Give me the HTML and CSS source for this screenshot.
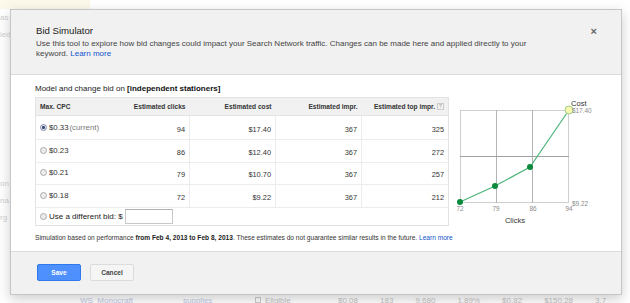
FILE: index.html
```html
<!DOCTYPE html>
<html lang="en">
<head>
    <meta charset="UTF-8">
    <meta name="viewport" content="width=device-width, initial-scale=1.0">
    <title>Bid Simulator</title>
    <link rel="stylesheet" href="styles.css">
</head>
<body>
    <!-- page behind the dialog -->
    <div class="page">
        <div class="page-top"></div>
        <div class="page-side">
            <span>as</span>
            <span>ied</span>
            <span class="gap">on</span>
            <span>na</span>
            <span>rg</span>
        </div>
        <div class="page-row">
            <span class="c-kw">WS_Monocraft</span>
            <span class="c-grp">supplies</span>
            <span class="c-st"><i class="box"></i>Eligible</span>
            <span class="c-n">$0.08</span>
            <span class="c-n">183</span>
            <span class="c-n">9,680</span>
            <span class="c-n">1.89%</span>
            <span class="c-n">$0.82</span>
            <span class="c-n">$150.28</span>
            <span class="c-n">3.7</span>
        </div>
    </div>

    <div class="dialog">
        <div class="dialog-head">
            <div class="title-row">
                <h1>Bid Simulator</h1>
                <span class="close">&#215;</span>
            </div>
            <p class="intro">Use this tool to explore how bid changes could impact your Search Network traffic. Changes can be made here and applied directly to your keyword. <a href="#">Learn more</a></p>
        </div>

        <div class="dialog-body">
            <div class="sim">
                <div class="sim-left">
                    <p class="model">Model and change bid on <b>[independent stationers]</b></p>
                    <table class="bids">
                        <tr class="head">
                            <th class="cpc">Max. CPC</th>
                            <th>Estimated clicks</th>
                            <th>Estimated cost</th>
                            <th>Estimated impr.</th>
                            <th>Estimated top impr. <span class="help">?</span></th>
                        </tr>
                        <tr class="first">
                            <td class="cpc"><label><input type="radio" name="bid" checked> $0.33 <span class="cur">(current)</span></label></td>
                            <td>94</td>
                            <td class="sep">$17.40</td>
                            <td class="sep">367</td>
                            <td class="sep">325</td>
                        </tr>
                        <tr>
                            <td class="cpc"><label><input type="radio" name="bid"> $0.23</label></td>
                            <td>86</td>
                            <td class="sep">$12.40</td>
                            <td class="sep">367</td>
                            <td class="sep">272</td>
                        </tr>
                        <tr>
                            <td class="cpc"><label><input type="radio" name="bid"> $0.21</label></td>
                            <td>79</td>
                            <td class="sep">$10.70</td>
                            <td class="sep">367</td>
                            <td class="sep">257</td>
                        </tr>
                        <tr>
                            <td class="cpc"><label><input type="radio" name="bid"> $0.18</label></td>
                            <td>72</td>
                            <td class="sep">$9.22</td>
                            <td class="sep">367</td>
                            <td class="sep">212</td>
                        </tr>
                        <tr class="other">
                            <td colspan="5"><label><input type="radio" name="bid"> Use a different bid: $ <input type="text" class="bid-input"></label></td>
                        </tr>
                    </table>
                </div>

                <svg class="chart" viewBox="452 96 150 132" width="150" height="132">
                    <rect x="460.5" y="111.5" width="108" height="92" fill="none" stroke="#cfcfcf"/>
                    <line x1="496.5" y1="111" x2="496.5" y2="204" stroke="#b5b5b5"/>
                    <line x1="532.5" y1="111" x2="532.5" y2="204" stroke="#b5b5b5"/>
                    <line x1="460" y1="157.5" x2="569" y2="157.5" stroke="#a0a0a0"/>
                    <polyline points="460,203 495,187 530,168 569,111" fill="none" stroke="#4cb57a" stroke-width="1.2"/>
                    <circle cx="460" cy="203" r="3" fill="#0b8a3c"/>
                    <circle cx="495" cy="187" r="3" fill="#0b8a3c"/>
                    <circle cx="530" cy="168" r="3" fill="#0b8a3c"/>
                    <circle cx="569" cy="111" r="4" fill="#f7f7b0" stroke="#9fd08a"/>
                    <text x="460" y="212" text-anchor="middle" class="tick">72</text>
                    <text x="496" y="212" text-anchor="middle" class="tick">79</text>
                    <text x="533" y="212" text-anchor="middle" class="tick">86</text>
                    <text x="569" y="212" text-anchor="middle" class="tick">94</text>
                    <text x="571" y="107" class="axis">Cost</text>
                    <text x="572" y="114" class="tick">$17.40</text>
                    <text x="572" y="207" class="tick">$9.22</text>
                    <text x="515" y="224" text-anchor="middle" class="axis">Clicks</text>
                </svg>
            </div>

            <p class="note">Simulation based on performance <b>from Feb 4, 2013 to Feb 8, 2013</b>. These estimates do not guarantee similar results in the future. <a href="#">Learn more</a></p>
        </div>

        <div class="dialog-foot">
            <button class="btn save">Save</button>
            <button class="btn cancel">Cancel</button>
        </div>
    </div>
</body>
</html>
```

FILE: styles.css
```css
/* reset */
*{
    margin: 0;
    padding: 0;
    box-sizing: border-box;
}
body{
    width: 630px;
    height: 303px;
    overflow: hidden;
    background: #fff;
    font-family: "Liberation Sans", Arial, sans-serif;
    color: #333;
}
a{
    color: #15c;
    text-decoration: none;
}

/* faded page behind */
.page{
    height: 303px;
    display: flex;
    flex-direction: column;
}
.page-top{
    width: 90px;
    height: 9px;
    background: #fcf8ea;
}
.page-side{
    display: flex;
    flex-direction: column;
    gap: 8px;
    padding-top: 4px;
    font-size: 8px;
    color: #cfcfcf;
}
.page-side .gap{
    margin-top: 132px;
}
.page-row{
    margin-top: auto;
    display: flex;
    padding-left: 80px;
    height: 8px;
    font-size: 8px;
    line-height: 11px;
    color: #c4c4c4;
}
.page-row .c-kw{
    width: 103px;
    color: #bfcbe6;
}
.page-row .c-grp{
    width: 72px;
    color: #bfcbe6;
}
.page-row .c-st{
    width: 83px;
}
.page-row .box{
    display: inline-block;
    width: 6px;
    height: 6px;
    border: 1px solid #ccc;
    margin-right: 4px;
}
.page-row .c-n{
    margin-right: 22px;
}

/* dialog */
.dialog{
    position: absolute;
    left: 10px;
    top: 9px;
    width: 612px;
    border: 1px solid #c6c6c6;
    background: #fff;
    box-shadow: 0 4px 12px rgba(0, 0, 0, 0.2);
}
.dialog-head{
    background: #f1f1f1;
    border-bottom: 1px solid #dcdcdc;
    padding: 15px 24px 15px 25px;
}
.title-row{
    display: flex;
    justify-content: space-between;
}
h1{
    font-size: 9.6px;
    font-weight: normal;
    line-height: 12px;
    color: #222;
}
.close{
    font-size: 11px;
    font-weight: bold;
    line-height: 10px;
    color: #666;
    margin-top: 1px;
}
.intro{
    margin-top: 2px;
    max-width: 496px;
    font-size: 8px;
    line-height: 10px;
    color: #444;
}

.dialog-body{
    padding: 8px 0 9px 24px;
}
.sim{
    display: flex;
}
.sim-left{
    width: 414px;
}
.model{
    font-size: 8px;
    line-height: 11px;
    color: #222;
}
.model b{
    color: #111;
}
.chart{
    margin: 12px 0 0 3px;
    display: block;
}
.chart .tick{
    font-size: 6.4px;
    fill: #8a8a8a;
}
.chart .axis{
    font-size: 7.6px;
    fill: #333;
}

/* table */
.bids{
    margin-top: 3px;
    width: 414px;
    border: 1px solid #e3e3e3;
    border-collapse: collapse;
    table-layout: fixed;
    font-size: 7.4px;
    color: #333;
}
.bids th{
    height: 18px;
    background: #f1f1f1;
    border-bottom: 1px solid #e3e3e3;
    font-size: 6.6px;
    color: #333;
    text-align: right;
    padding-right: 4px;
    white-space: nowrap;
}
.bids th.cpc, .bids td.cpc{
    text-align: left;
    padding-left: 4px;
    width: 74px;
}
.bids th:nth-child(2){
    width: 80px;
}
.bids th:nth-child(3), .bids th:nth-child(4){
    width: 86px;
}
.bids td{
    height: 22.5px;
    text-align: right;
    padding: 3px 4px 0 0;
    border-bottom: 1px solid #ececec;
}
.bids td.cpc{
    padding-top: 0;
    font-size: 7.8px;
}
.bids td.sep{
    border-left: 1px solid #ececec;
}
.bids tr.first td{
    height: 24px;
}
.bids .cur{
    color: #777;
}
.bids tr.other td{
    height: 18px;
    text-align: left;
    padding: 0 0 0 4px;
    border-bottom: 0;
    font-size: 8px;
    color: #222;
}
.bids label{
    display: inline-flex;
    align-items: center;
    gap: 1px;
}
.help{
    display: inline-block;
    width: 7px;
    height: 7px;
    border: 1px solid #ccc;
    font-size: 5px;
    line-height: 5px;
    text-align: center;
    color: #999;
    font-weight: normal;
    vertical-align: middle;
}
input[type="radio"]{
    appearance: none;
    width: 7px;
    height: 7px;
    border: 1px solid #aaa;
    border-radius: 50%;
    background: #ececec;
    margin-right: 1px;
}
input[type="radio"]:checked{
    background: radial-gradient(circle, #3a4a78 35%, #dfe3ee 50%);
    border-color: #8a93ab;
}
.bid-input{
    width: 48px;
    height: 15px;
    border: 1px solid #c8c8c8;
    border-top-color: #b0b0b0;
    margin-left: 1px;
}

.note{
    margin-top: 6px;
    font-size: 6.6px;
    line-height: 9px;
    color: #333;
}
.note b{
    color: #222;
}

/* footer */
.dialog-foot{
    background: #f1f1f1;
    border-top: 1px solid #dcdcdc;
    padding: 12px 26px 13px;
    display: flex;
    gap: 9px;
}
.btn{
    width: 44px;
    height: 17px;
    border-radius: 2px;
    font-family: "Liberation Sans", Arial, sans-serif;
    font-size: 6.6px;
    font-weight: bold;
}
.save{
    background: #4d90fe;
    border: 1px solid #3079ed;
    color: #fff;
}
.cancel{
    background: #f5f5f5;
    border: 1px solid #dcdcdc;
    color: #444;
}
```
